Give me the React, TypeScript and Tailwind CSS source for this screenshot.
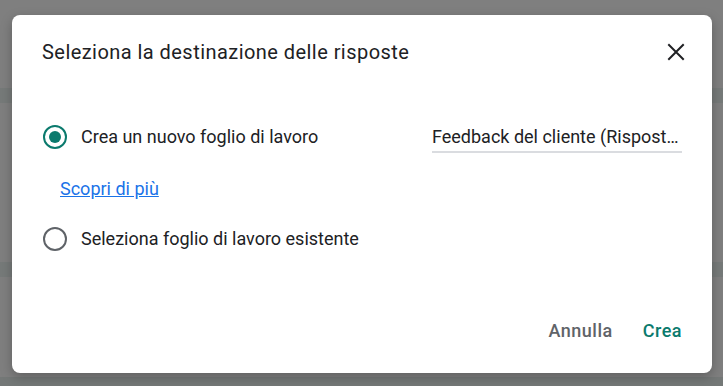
import { useState } from 'react';

function Radio({ checked }: { checked: boolean }) {
  return (
    <span
      className={`flex h-6 w-6 shrink-0 items-center justify-center rounded-full border-[2.5px] ${
        checked ? 'border-[#0b7a6d]' : 'border-[#5f6368]'
      }`}
    >
      {checked && <span className="h-3 w-3 rounded-full bg-[#0b7a6d]" />}
    </span>
  );
}

export default function App() {
  const [choice, setChoice] = useState<'new' | 'existing'>('new');

  return (
    <div className="relative h-[386px] w-[723px] overflow-hidden font-['Roboto',sans-serif]">
      {/* dimmed page behind the dialog */}
      <div className="flex h-full flex-col bg-[#7f7f7f]">
        <div className="h-[88px]" />
        <div className="h-[15px] bg-[#767a79]" />
        <div className="h-[159px]" />
        <div className="h-[15px] bg-[#767a79]" />
        <div className="h-[100px]" />
        <div className="flex-1 bg-[#747877]" />
      </div>

      <div className="absolute left-[12px] top-[15px] flex h-[358px] w-[700px] flex-col rounded-lg bg-white shadow-[0_4px_12px_rgba(0,0,0,0.25)]">
        <div className="flex items-center justify-between pl-[30px] pr-[24px] pt-[23px]">
          <h1 className="text-[20px] leading-7 tracking-[0.45px] text-[#202124]">Seleziona la destinazione delle risposte</h1>
          <button className="flex h-6 w-6 items-center justify-center text-[#202124]">
            <svg width="18" height="18" viewBox="0 0 18 18" fill="none" stroke="currentColor" strokeWidth="2" strokeLinecap="square">
              <path d="M2 2L16 16M16 2L2 16" />
            </svg>
          </button>
        </div>

        <div className="mt-[59px] flex items-start justify-between pl-[31px] pr-[30px]">
          <label className="flex cursor-pointer items-center gap-[14px]" onClick={() => setChoice('new')}>
            <Radio checked={choice === 'new'} />
            <span className="text-[18px] leading-6 text-[#202124]">Crea un nuovo foglio di lavoro</span>
          </label>
          <div className="w-[250px] border-b-2 border-[#dadce0] pb-[2px]">
            <div className="truncate text-[18px] leading-6 text-[#202124]">Feedback del cliente (Risposte)</div>
          </div>
        </div>

        <a href="#" className="mt-[24px] ml-[48px] self-start text-[18px] leading-6 text-[#1a73e8] underline">
          Scopri di più
        </a>

        <label className="mt-[26px] flex cursor-pointer items-center gap-[14px] pl-[31px]" onClick={() => setChoice('existing')}>
          <Radio checked={choice === 'existing'} />
          <span className="text-[18px] leading-6 text-[#202124]">Seleziona foglio di lavoro esistente</span>
        </label>

        <div className="mt-auto mb-[25px] flex items-center justify-end gap-[30px] pr-[30px]">
          <button className="h-9 text-[18px] font-medium tracking-[0.5px] text-[#5f6368]">Annulla</button>
          <button className="h-9 text-[18px] font-medium tracking-[0.5px] text-[#0b7a6d]">Crea</button>
        </div>
      </div>
    </div>
  );
}
